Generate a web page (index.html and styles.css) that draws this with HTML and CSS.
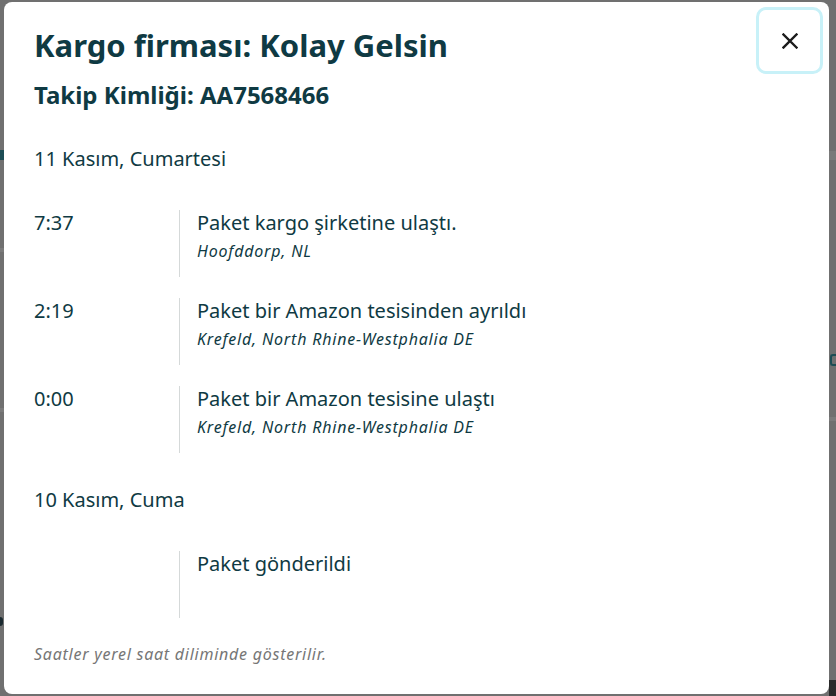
FILE: index.html
```html
<!DOCTYPE html>
<html lang="tr">

<head>
  <meta charset="UTF-8">
  <meta name="viewport" content="width=device-width, initial-scale=1.0">
  <title>Kargo takibi</title>
  <link rel="stylesheet" href="styles.css">
</head>

<body>
  <!-- arka plan sayfası (karartılmış) -->
  <div class="backdrop">
    <span class="bg-tab"></span>
    <span class="bg-band"></span>
    <span class="bg-rule bg-rule-1"></span>
    <span class="bg-rule bg-rule-2"></span>
    <span class="bg-rule bg-rule-3"></span>
    <span class="bg-glyph"></span>
    <span class="bg-dot"></span>
    <span class="bg-corner"></span>
  </div>

  <!-- takip penceresi -->
  <div class="modal">
    <button class="close" type="button" aria-label="Kapat">
      <svg width="16" height="16" viewBox="0 0 16 16">
        <path d="M1.5 1.5 L14.5 14.5 M14.5 1.5 L1.5 14.5" stroke="#1b1b1b" stroke-width="2.4" stroke-linecap="square" />
      </svg>
    </button>

    <h1>Kargo firması: Kolay Gelsin</h1>
    <h2>Takip Kimliği: AA7568466</h2>

    <div class="day first">
      <div class="day-title">11 Kasım, Cumartesi</div>
      <div class="event">
        <div class="time">7:37</div>
        <div class="info">
          <div class="msg">Paket kargo şirketine ulaştı.</div>
          <div class="place">Hoofddorp, NL</div>
        </div>
      </div>
      <div class="event">
        <div class="time">2:19</div>
        <div class="info">
          <div class="msg">Paket bir Amazon tesisinden ayrıldı</div>
          <div class="place">Krefeld, North Rhine-Westphalia DE</div>
        </div>
      </div>
      <div class="event">
        <div class="time">0:00</div>
        <div class="info">
          <div class="msg">Paket bir Amazon tesisine ulaştı</div>
          <div class="place">Krefeld, North Rhine-Westphalia DE</div>
        </div>
      </div>
    </div>

    <div class="day">
      <div class="day-title">10 Kasım, Cuma</div>
      <div class="event">
        <div class="time"></div>
        <div class="info">
          <div class="msg">Paket gönderildi</div>
        </div>
      </div>
    </div>

    <p class="note">Saatler yerel saat diliminde gösterilir.</p>
  </div>
</body>

</html>
```

FILE: styles.css
```css
* {
  box-sizing: border-box;
}

body {
  margin: 0;
  height: 696px;
  overflow: hidden;
  background-color: #707070;
  font-family: "Noto Sans", "Open Sans", sans-serif;
  color: #0f3a43;
  padding: 2px 7px 2px 4px;
}

.backdrop span {
  position: absolute;
  display: block;
}

.bg-tab {
  left: 0;
  top: 150px;
  width: 4px;
  height: 10px;
  background-color: #1d4d55;
}

.bg-band {
  left: 829px;
  top: 151px;
  width: 7px;
  height: 9px;
  background-color: #7a7a7a;
}

.bg-rule {
  height: 4px;
  background-color: #7b7b7b;
}

.bg-rule-1 {
  left: 0;
  top: 248px;
  width: 4px;
}

.bg-rule-2 {
  left: 0;
  top: 408px;
  width: 4px;
}

.bg-rule-3 {
  left: 829px;
  top: 417px;
  width: 7px;
}

.bg-glyph {
  left: 830px;
  top: 354px;
  width: 6px;
  height: 12px;
  border: 2px solid #1d4d55;
  border-right: none;
  border-radius: 3px 0 0 3px;
}

.bg-dot {
  left: -3px;
  top: 617px;
  width: 6px;
  height: 9px;
  border-radius: 3px;
  background-color: #1b2a30;
}

.bg-corner {
  left: 829px;
  top: 680px;
  width: 7px;
  height: 16px;
  background-color: #2a2a2a;
}

.modal {
  position: relative;
  height: 692px;
  background-color: #fff;
  border-radius: 8px;
  padding: 23px 30px 0;
}

.close {
  position: absolute;
  top: 5px;
  right: 6px;
  width: 67px;
  height: 67px;
  border: 3px solid #c8f1f8;
  border-radius: 10px;
  background: #fff;
  display: flex;
  align-items: center;
  justify-content: center;
  padding: 0;
  cursor: pointer;
}

h1 {
  margin: 0;
  font-size: 31px;
  line-height: 40px;
  font-weight: 700;
}

h2 {
  margin: 15px 0 0;
  font-size: 24px;
  line-height: 30px;
  font-weight: 700;
}

/* margins collapse with the last event's margin-bottom */
.day {
  margin-top: 34px;
}

.day.first {
  margin-top: 36px;
}

.day-title {
  font-size: 20px;
  line-height: 26px;
  margin-bottom: 38px;
}

.event {
  display: flex;
  margin-bottom: 21px;
}

.time {
  width: 145px;
  flex-shrink: 0;
  font-size: 20px;
  line-height: 26px;
}

.info {
  border-left: 1px solid #d5d9d9;
  padding-left: 17px;
  height: 67px;
}

.msg {
  font-size: 20px;
  line-height: 26px;
}

.place {
  margin-top: 4px;
  font-size: 16px;
  line-height: 22px;
  font-style: italic;
  letter-spacing: 0.8px;
}

.note {
  margin: 25px 0 0;
  font-size: 16px;
  line-height: 22px;
  font-style: italic;
  letter-spacing: 0.75px;
  color: #767676;
}
```
